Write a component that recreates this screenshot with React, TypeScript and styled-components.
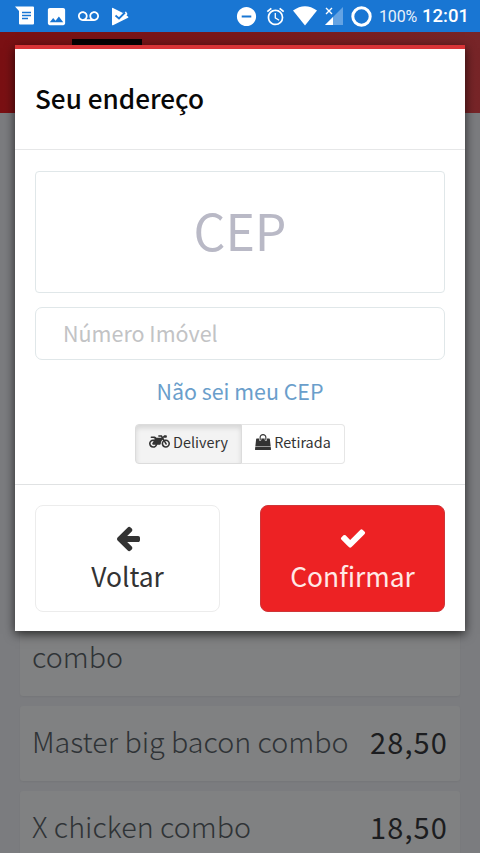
import React, { ReactNode } from 'react';
import styled, { createGlobalStyle } from 'styled-components';
import { FaMotorcycle } from 'react-icons/fa';
import { MdAccessAlarm, MdImage, MdRemoveCircle, MdVoicemail } from 'react-icons/md';

const fonts = {
  body: `'Noto Sans CJK SC', 'Open Sans', sans-serif`,
  system: `Roboto, sans-serif`,
}

const colors = {
  statusBar: '#1976d3',
  brand: '#ed2224',
  border: '#e0e7e9',
  text: '#333',
}

const GlobalStyle = createGlobalStyle`
  * { box-sizing: border-box; }
  body {
    margin: 0;
    font-family: ${fonts.body};
    color: ${colors.text};
  }
  button, input { font-family: inherit; }
`

const Styles = {
  Screen: styled.div`
    position: relative;
    display: flex;
    flex-direction: column;
    width: 480px;
    height: 853px;
    overflow: hidden;
    background: #7b7c7f;
  `,

  StatusBar: styled.div`
    display: flex;
    flex: none;
    justify-content: space-between;
    height: 32px;
    padding: 0 11px 0 15px;
    background: ${colors.statusBar};
    color: #fff;
    font-family: ${fonts.system};
  `,

  StatusGroup: styled.div<{ gap: number }>`
    display: flex;
    align-items: center;
    gap: ${p => p.gap}px;
  `,

  Battery: styled.span`
    width: 38px;
    margin-right: -2px;
    font-size: 16px;
    letter-spacing: -.2px;
    white-space: nowrap;
    opacity: .9;
  `,

  Clock: styled.span`
    font-size: 18.5px;
    font-weight: 500;
    white-space: nowrap;
  `,

  Header: styled.div`
    flex: none;
    height: 81px;
    padding: 7px 72px;
    background: linear-gradient(90deg, #7a1013, #7a181b 50%, #772528);
  `,

  Logo: styled.div`
    width: 70px;
    height: 60px;
    background: #050203;
  `,

  List: styled.div`
    display: flex;
    flex-direction: column;
    gap: 10px;
    padding: 473px 20px 0;
  `,

  Item: styled.div<{ height: number }>`
    display: flex;
    flex: none;
    align-items: flex-end;
    justify-content: space-between;
    height: ${p => p.height}px;
    padding: 0 12px 20px;
    border-radius: 3px;
    background: #808182;
    box-shadow: 0 1px 2px rgba(0, 0, 0, .05);
    line-height: 40px;
    white-space: nowrap;
  `,

  ItemName: styled.span`
    font-size: 28.7px;
    font-weight: 300;
    color: #2f3336;
  `,

  ItemPrice: styled.span`
    font-size: 29px;
    letter-spacing: 1.1px;
    color: #1c1d20;
  `,
}

const Modal = {
  Backdrop: styled.div`
    position: absolute;
    inset: 32px 0 0;
    padding: 13px 15px 0;
  `,

  Box: styled.div`
    display: flex;
    flex-direction: column;
    height: 586px;
    border-top: 4px solid #d93437;
    background: #fff;
    box-shadow: 0 3px 10px rgba(0, 0, 0, .7);
  `,

  Title: styled.div`
    flex: none;
    height: 101px;
    padding: 0 20px;
    border-bottom: 1px solid #e6e7e8;
    font-size: 26.1px;
    font-weight: 500;
    line-height: 98px;
    color: #080808;
  `,

  Body: styled.div`
    display: flex;
    flex: none;
    flex-direction: column;
    align-items: center;
    height: 334px;
    padding: 21px 20px 0;
  `,

  Footer: styled.div`
    display: grid;
    grid-template-columns: 185px 185px;
    justify-content: space-between;
    padding: 20px;
    border-top: 1px solid #e0e2e3;
  `,
}

const Input = styled.input<{ big?: boolean }>`
  flex: none;
  width: 100%;
  height: ${p => p.big ? 122 : 53}px;
  margin-bottom: ${p => p.big ? 14 : 12}px;
  padding: ${p => p.big ? '0 0 7px' : '0 27px 2px'};
  border: 1px solid ${colors.border};
  border-radius: ${p => p.big ? 4 : 7}px;
  outline: none;
  background: #fff;
  font-size: ${p => p.big ? 50 : 21.5}px;
  text-align: ${p => p.big ? 'center' : 'left'};
  &::placeholder {
    color: ${p => p.big ? '#b9b9c6' : '#c2c3c5'};
    opacity: 1;
  }
`

const Link = styled.a`
  margin-top: -1px;
  font-size: 21.4px;
  line-height: 40px;
  color: #6a9ecb;
  white-space: nowrap;
`

const ButtonGroup = styled.div`
  display: flex;
  width: 210px;
  height: 40px;
  margin-top: 13px;
`

const Option = styled.button<{ active?: boolean }>`
  display: flex;
  align-items: center;
  justify-content: center;
  gap: 3px;
  width: ${p => p.active ? 107 : 103}px;
  padding: 0 0 5px;
  border: 1px solid ${p => p.active ? '#dcdcdc' : '#e6e6e6'};
  border-left-width: ${p => p.active ? 1 : 0}px;
  border-radius: ${p => p.active ? '4px 0 0 4px' : '0 4px 4px 0'};
  background: ${p => p.active ? '#f3f3f3' : '#fff'};
  box-shadow: ${p => p.active ? 'inset 0 3px 5px rgba(0, 0, 0, .12)' : 'none'};
  font-size: 14.4px;
  color: ${colors.text};
  white-space: nowrap;
`

const Action = styled.button<{ primary?: boolean }>`
  display: flex;
  flex-direction: column;
  align-items: center;
  height: 107px;
  padding: 18px 0 0;
  border: 1px solid ${p => p.primary ? '#cf3538' : '#ececec'};
  border-radius: 8px;
  background: ${p => p.primary ? colors.brand : '#fff'};
  font-size: 26.4px;
  line-height: 40px;
  color: ${p => p.primary ? '#ffe9e6' : colors.text};
  svg {
    flex: none;
    margin-bottom: 4px;
    color: ${p => p.primary ? '#fff' : 'inherit'};
  }
`

const Glyph = ({ d, size }: { d: string; size: number }) => (
  <svg width={size} height={size} viewBox='0 0 1792 1792' fill='currentColor'>
    <path d={d} />
  </svg>
)

const paths = {
  arrow: 'M1664 896v128q0 53-32.5 90.5t-84.5 37.5h-704l293 294q38 36 38 90t-38 90l-75 76q-37 37-90 37-52 0-91-37l-651-652q-37-37-37-90 0-52 37-91l651-650q38-38 91-38 52 0 90 38l75 74q38 38 38 91t-38 91l-293 293h704q52 0 84.5 37.5t32.5 90.5z',
  check: 'M1671 566q0 40-28 68l-724 724-136 136q-28 28-68 28t-68-28l-136-136-362-362q-28-28-28-68t28-68l136-136q28-28 68-28t68 28l294 295 656-657q28-28 68-28t68 28l136 136q28 28 28 68z',
  bag: 'M1757 1408l35 313q3 28-16 50-19 21-48 21H64q-29 0-48-21-19-22-16-50l35-313h1722zM1664 569l86 775H42l86-775q3-24 21-40.500t43-16.500h256v128q0 53 37.500 90.500t90.500 37.500 90.500-37.500 37.500-90.500V512h384v128q0 53 37.500 90.500t90.500 37.500 90.500-37.500 37.500-90.500V512h256q25 0 43 16.500t21 40.500zM1280 384v256q0 26-19 45t-45 19-45-19-19-45V384q0-106-75-181t-181-75-181 75-75 181v256q0 26-19 45t-45 19-45-19-19-45V384q0-159 112.500-271.500T896 0t271.500 112.500T1280 384z',
}

const MessageIcon = () => (
  <svg width='20' height='20' viewBox='0 0 20 20'>
    <path d='M0 .5h18q1 0 1 1v16q0 1-1 1H5q-1 0-1-1V5z' fill='#fff' />
    <path d='M7 6.500h9M7 9.500h9M7 12.500h6' stroke={colors.statusBar} strokeWidth='1.4' />
  </svg>
)

const PlayIcon = () => (
  <svg width='20' height='19' viewBox='-2 0 20 19'>
    <path d='M1 1.500q0-1 1-.5l10 5 3-1.500 1.500 2.500-1 1.500 1.500 1q1 .7 0 1.300L2 18.200q-1 .5-1-.7z' fill='#fff' />
    <path d='M4.500 8.500l3.500 3 6-6' fill='none' stroke={colors.statusBar} strokeWidth='1.800' />
  </svg>
)

const WifiIcon = () => (
  <svg width='24' height='20' viewBox='0 0 24 20'>
    <path d='M0 4.500Q12-4 24 4.500L12 19.500z' fill='#fff' />
  </svg>
)

const SignalIcon = () => (
  <svg width='20' height='20' viewBox='0 0 20 20'>
    <path d='M19 1v18H1z' fill='#64a3e3' />
    <path d='M9 11v8H1z' fill='#fff' />
    <path d='M2 2l6 6M8 2l-6 6' stroke='#fff' strokeWidth='1.400' />
  </svg>
)

const RingIcon = () => (
  <svg width='21' height='21' viewBox='0 0 21 21'>
    <circle cx='10.500' cy='10.500' r='8.700' fill='none' stroke='#fff' strokeWidth='3' />
  </svg>
)

const StatusBar = () => (
  <Styles.StatusBar>
    <Styles.StatusGroup gap={10}>
      <MessageIcon />
      <MdImage size={23} />
      <MdVoicemail size={21} />
      <PlayIcon />
    </Styles.StatusGroup>
    <Styles.StatusGroup gap={7}>
      <MdRemoveCircle size={23} />
      <MdAccessAlarm size={21} />
      <WifiIcon />
      <SignalIcon />
      <RingIcon />
      <Styles.Battery>100%</Styles.Battery>
      <Styles.Clock>12:01</Styles.Clock>
    </Styles.StatusGroup>
  </Styles.StatusBar>
)

const Item = ({ name, price, height = 75 }: { name: ReactNode; price?: string; height?: number }) => (
  <Styles.Item height={height}>
    <Styles.ItemName>{name}</Styles.ItemName>
    {price && <Styles.ItemPrice>{price}</Styles.ItemPrice>}
  </Styles.Item>
)

const AddressModal = () => (
  <Modal.Backdrop>
    <Modal.Box>
      <Modal.Title>Seu endereço</Modal.Title>
      <Modal.Body>
        <Input big placeholder='CEP' />
        <Input placeholder='Número Imóvel' />
        <Link>Não sei meu CEP</Link>
        <ButtonGroup>
          <Option active><FaMotorcycle size={21} />Delivery</Option>
          <Option><Glyph d={paths.bag} size={16} />Retirada</Option>
        </ButtonGroup>
      </Modal.Body>
      <Modal.Footer>
        <Action><Glyph d={paths.arrow} size={28} />Voltar</Action>
        <Action primary><Glyph d={paths.check} size={28} />Confirmar</Action>
      </Modal.Footer>
    </Modal.Box>
  </Modal.Backdrop>
)

const App = () => (
  <Styles.Screen>
    <GlobalStyle />
    <StatusBar />
    <Styles.Header><Styles.Logo /></Styles.Header>
    <Styles.List>
      <Item name='combo' height={110} />
      <Item name='Master big bacon combo' price='28,50' />
      <Item name='X chicken combo' price='18,50' />
    </Styles.List>
    <AddressModal />
  </Styles.Screen>
)

export default App
